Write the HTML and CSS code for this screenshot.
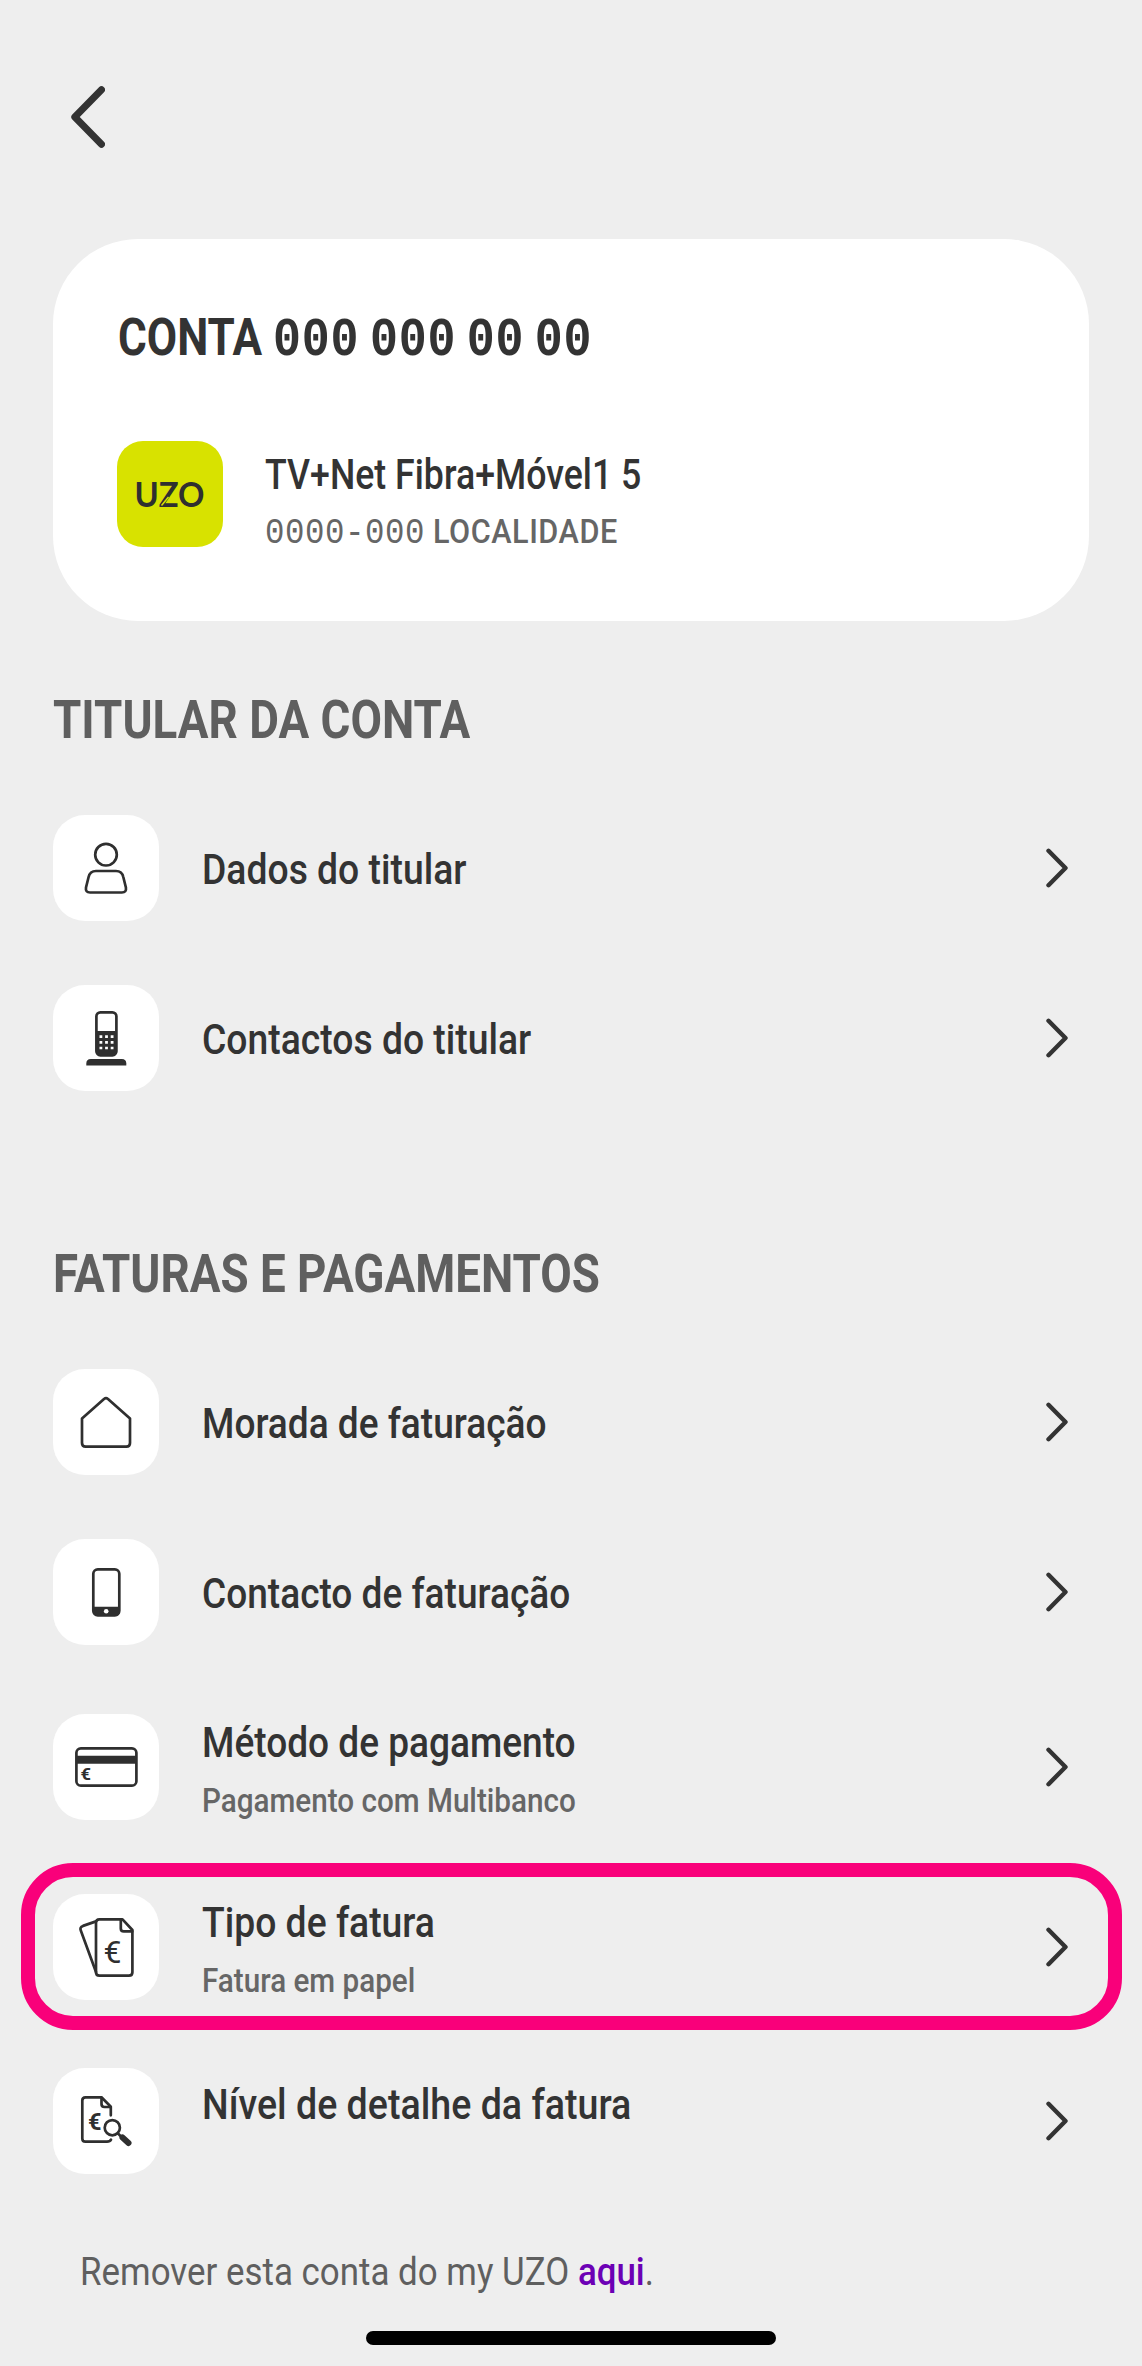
FILE: index.html
```html
<!DOCTYPE html>
<html lang="pt">
  <head>
    <meta charset="UTF-8" />
    <meta name="viewport" content="width=device-width, initial-scale=1.0" />
    <title>my UZO - Conta</title>
    <link rel="stylesheet" href="styles.css">
  </head>
  <body>
    <header class="topbar">
      <svg class="back" viewBox="0 0 34 62"><path d="M30.5 3.8 3.8 31l26.7 27.2" /></svg>
    </header>

    <main>
      <section class="account-card">
        <h1><span>CONTA <b class="digits">000 000 00 00</b></span></h1>
        <div class="account">
          <svg class="logo" viewBox="0 0 106 106">
            <text x="17.500" y="65.5" textLength="70" lengthAdjust="spacingAndGlyphs">UZO</text>
            <path d="M44.5 64.5 51.5 56" />
          </svg>
          <div class="account-text">
            <div class="title title-pack"><span>TV+Net Fibra+Móvel1 5</span></div>
            <div class="sub sub-place"><span><b class="digits">0000-000</b> LOCALIDADE</span></div>
          </div>
        </div>
      </section>

      <h2><span>TITULAR DA CONTA</span></h2>
      <div class="list list-holder">
        <a class="row">
          <svg class="icon" viewBox="0 0 106 106">
            <circle cx="53" cy="39.7" r="10.8" />
            <path d="M43 56h20q6 0 7.300 6l2.600 10.500q.800 5-4 5H37q-4.800 0-4-5l2.600-10.500q1.400-6 7.400-6z" />
          </svg>
          <div class="label"><div class="title"><span>Dados do titular</span></div></div>
          <svg class="chevron" viewBox="0 0 22 40"><path d="m2.500 2.800 17 17.200-17 17.200" /></svg>
        </a>
        <a class="row">
          <svg class="icon" viewBox="0 0 106 106">
            <rect x="43.400" y="27.300" width="20" height="43" rx="4" />
            <path class="fill" d="M43 46h21v20q0 5-5 5H48q-5 0-5-5z" />
            <path class="keys" d="M46.500 51.700h14M46.500 57.300h14M46.500 63h14" />
            <path class="fill" d="M33.300 80.500v-2q0-4.500 4.500-4.500h31q4.500 0 4.500 4.500v2z" />
          </svg>
          <div class="label"><div class="title"><span>Contactos do titular</span></div></div>
          <svg class="chevron" viewBox="0 0 22 40"><path d="m2.500 2.800 17 17.200-17 17.200" /></svg>
        </a>
      </div>

      <h2><span>FATURAS E PAGAMENTOS</span></h2>
      <div class="list">
        <a class="row">
          <svg class="icon" viewBox="0 0 106 106">
            <path d="M29 49.500 51 30q2-1.600 4 0l22 19.500V74q0 3.700-3.700 3.700H32.700Q29 77.700 29 74z" />
          </svg>
          <div class="label"><div class="title"><span>Morada de faturação</span></div></div>
          <svg class="chevron" viewBox="0 0 22 40"><path d="m2.500 2.800 17 17.200-17 17.200" /></svg>
        </a>
        <a class="row">
          <svg class="icon" viewBox="0 0 106 106">
            <rect x="40.300" y="30.300" width="26" height="46" rx="4.500" />
            <path class="fill" d="M40 67.700h27V72q0 5-5 5H45q-5 0-5-5z" />
            <circle class="hole" cx="53.200" cy="72.300" r="2.300" />
          </svg>
          <div class="label"><div class="title"><span>Contacto de faturação</span></div></div>
          <svg class="chevron" viewBox="0 0 22 40"><path d="m2.500 2.800 17 17.200-17 17.200" /></svg>
        </a>
        <a class="row row-method">
          <svg class="icon" viewBox="0 0 106 106">
            <rect x="23.400" y="34.300" width="60" height="37.400" rx="4.500" />
            <path class="fill" d="M23 41.700h61v8H23z" />
            <text class="euro-bold" x="27.500" y="66.300" font-size="17" textLength="10.500" lengthAdjust="spacingAndGlyphs">€</text>
          </svg>
          <div class="label">
            <div class="title"><span>Método de pagamento</span></div>
            <div class="sub"><span>Pagamento com Multibanco</span></div>
          </div>
          <svg class="chevron" viewBox="0 0 22 40"><path d="m2.500 2.800 17 17.200-17 17.200" /></svg>
        </a>
        <a class="row row-active">
          <svg class="icon" viewBox="0 0 106 106">
            <path d="M46.500 25.300h23L79.400 36v42.200q0 3.500-3.500 3.500H46.500q-3.500 0-3.500-3.500V28.800q0-3.500 3.500-3.500z" />
            <path d="M67.800 26v8.400q0 3 3 3h8.400M43 27.400l-13 4.500q-3.500 1.300-2.200 4.700L43 78" />
            <text x="50.500" y="69" font-size="32" textLength="18" lengthAdjust="spacingAndGlyphs">€</text>
          </svg>
          <div class="label">
            <div class="title"><span>Tipo de fatura</span></div>
            <div class="sub"><span>Fatura em papel</span></div>
          </div>
          <svg class="chevron" viewBox="0 0 22 40"><path d="m2.500 2.800 17 17.200-17 17.200" /></svg>
        </a>
        <a class="row row-detail">
          <svg class="icon" viewBox="0 0 106 106">
            <path d="M57.800 47.300v-8.500L48.500 29.300h-16q-3.200 0-3.200 3.200v38q0 3.200 3.200 3.200H54q3 0 4-2" />
            <path d="M48.500 30v6q0 3 3 3h6" />
            <text class="euro-bold" x="35" y="62" font-size="24" textLength="13.500" lengthAdjust="spacingAndGlyphs">€</text>
            <circle cx="59.300" cy="59.700" r="7.600" />
            <path d="m65 65.500 4 4" />
            <path class="handle" d="m69.500 69.500 6 5.500" />
          </svg>
          <div class="label"><div class="title"><span>Nível de detalhe da fatura</span></div></div>
          <svg class="chevron" viewBox="0 0 22 40"><path d="m2.500 2.800 17 17.200-17 17.200" /></svg>
        </a>
      </div>

      <p class="remove"><span>Remover esta conta do my UZO <a>aqui</a>.</span></p>
    </main>

    <div class="home-bar"></div>
  </body>
</html>
```

FILE: styles.css
```css
* {
  box-sizing: border-box;
}
body {
  margin: 0;
  height: 2366px;
  padding: 86px 53px 0;
  background: #eeeeee;
  font-family: "Roboto", "Liberation Sans", sans-serif;
  color: #333333;
  overflow: hidden;
}
svg {
  display: block;
  flex: none;
  fill: none;
  stroke: #2f2f2f;
  stroke-width: 2.7;
  stroke-linecap: round;
  stroke-linejoin: round;
}
svg text {
  fill: #2f2f2f;
  stroke: none;
}
h1,
h2,
p {
  margin: 0;
  white-space: nowrap;
}
/* condensed lettering */
h1 > span,
h2 > span,
.title > span,
.sub > span,
.remove > span {
  display: inline-block;
  transform: scaleX(0.882);
  transform-origin: left;
}
.digits {
  font-family: "Liberation Mono", monospace;
  font-weight: inherit;
  line-height: 1;
}
.topbar {
  height: 153px;
  padding-left: 18px;
}
.back {
  width: 34px;
  height: 62px;
  stroke: #333333;
  stroke-width: 7;
}
.account-card {
  height: 382px;
  padding: 67px 64px 0;
  background: #ffffff;
  border-radius: 85px;
}
h1 {
  height: 64px;
  padding-left: 1px;
  font-size: 51px;
  line-height: 64px;
  font-weight: 700;
}
h1 > span {
  transform: scaleX(0.863);
}
h1 .digits {
  font-size: 54px;
  letter-spacing: 0.9px;
  word-spacing: -21px;
}
.account {
  display: flex;
  gap: 42px;
  margin-top: 71px;
}
.logo {
  width: 106px;
  height: 106px;
  background: #d8e200;
  border-radius: 26px;
}
.logo text {
  font-family: "Lato", sans-serif;
  font-weight: 700;
  font-size: 34px;
}
.logo path {
  stroke: #d8e200;
  stroke-width: 1.5;
  stroke-linecap: butt;
}
.account-text {
  padding-top: 7px;
}
.title {
  height: 54px;
  font-size: 42px;
  line-height: 54px;
  font-weight: 500;
  white-space: nowrap;
}
.title-pack > span {
  transform: scaleX(0.85);
}
.list-holder .title > span,
.row-active .title > span {
  transform: scaleX(0.888);
}
.row-detail .title > span {
  transform: scaleX(0.895);
}
.sub {
  height: 44px;
  margin-top: 8px;
  font-size: 34px;
  line-height: 44px;
  font-weight: 500;
  color: #666666;
  white-space: nowrap;
}
.sub > span {
  transform: scaleX(0.872);
}
.sub-place {
  margin-top: 7px;
  letter-spacing: 0.6px;
}
.sub-place > span {
  transform: scaleX(0.9);
}
.sub-place .digits {
  font-size: 36px;
}
h2 {
  margin-top: 66px;
  font-size: 54px;
  line-height: 66px;
  font-weight: 700;
  color: #5f5f5f;
}
h2 > span {
  transform: scaleX(0.847);
}
.list {
  display: flex;
  flex-direction: column;
  gap: 64px;
  margin: 62px 0 150px;
}
.row {
  display: flex;
  align-items: center;
  height: 106px;
}
.icon {
  width: 106px;
  height: 106px;
  background: #ffffff;
  border-radius: 32px;
}
.icon .fill {
  fill: #2f2f2f;
  stroke: none;
}
.icon .keys {
  stroke: #ffffff;
  stroke-linecap: butt;
  stroke-dasharray: 2.8 2.8;
}
.icon .hole {
  fill: #ffffff;
  stroke: none;
}
.icon .handle {
  stroke-width: 6;
}
.euro-bold {
  font-weight: 700;
}
.label {
  flex: 1;
  margin-left: 43px;
  padding-top: 4px;
}
.chevron {
  width: 22px;
  height: 40px;
  margin-right: 21px;
  stroke: #333333;
  stroke-width: 4.4;
}
.row-method {
  margin-top: 5px;
}
.row-active {
  height: 167px;
  margin: -21px -33px -26px -32px;
  padding: 17px 19px 16px 18px;
  border: 14px solid #f9007a;
  border-radius: 52px;
}
.row-detail .label {
  padding: 0 0 32px;
}
.remove {
  margin-top: -77px;
  padding-left: 27px;
  font-size: 39px;
  line-height: 50px;
  color: #5f5f5f;
}
.remove > span {
  transform: scaleX(0.895);
}
.remove a {
  color: #6c00b5;
  font-weight: 500;
}
.home-bar {
  width: 410px;
  height: 14px;
  margin: 34px auto 0;
  border-radius: 7px;
  background: #000000;
}
```
